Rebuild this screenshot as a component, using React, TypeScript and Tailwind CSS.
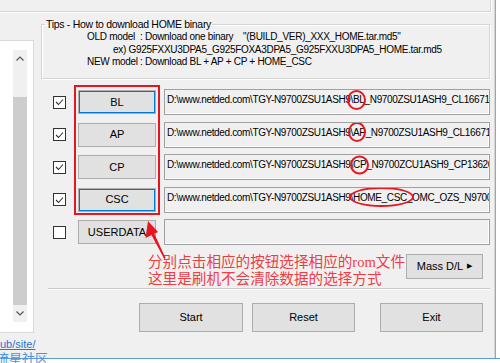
import React from "react";

const RED = "border-[#e5161f]";

function Check({ on }: { on: boolean }) {
  return (
    <div className="flex h-[13px] w-[13px] flex-none items-center justify-center border border-[#333] bg-white">
      {on && (
        <svg width="9" height="8" viewBox="0 0 9 8">
          <polyline points="1,4 3.5,6.5 8,1.5" fill="none" stroke="#333" strokeWidth="1.1" />
        </svg>
      )}
    </div>
  );
}

function Chevron({ up }: { up?: boolean }) {
  return (
    <svg width="8" height="5" viewBox="0 0 8 5">
      <polyline
        points={up ? "0.5,4.5 4,1 7.5,4.5" : "0.5,0.5 4,4 7.5,0.5"}
        fill="none"
        stroke="#555"
        strokeWidth="1.2"
      />
    </svg>
  );
}

type Row = {
  on: boolean;
  label: string;
  focus?: boolean;
  tag?: string;
  rest?: string;
  ring?: string;
  shift?: number;
};

const base = "D:\\www.netded.com\\TGY-N9700ZSU1ASH9";

const rows: Row[] = [
  { on: true, label: "BL", focus: true, tag: "\\BL", rest: "_N9700ZSU1ASH9_CL16671461_QB25185330_REV00.tar.md5", ring: "w-[19px] h-[20px]", shift: -11 },
  { on: true, label: "AP", tag: "\\AP", rest: "_N9700ZSU1ASH9_CL16671461_QB25185330_REV00.tar.md5", ring: "w-[18px] h-[20px]", shift: -10 },
  { on: true, label: "CP", tag: "\\CP", rest: "_N9700ZCU1ASH9_CP13620477_CL16671461.tar.md5", ring: "w-[19px] h-[19px]", shift: -8 },
  { on: true, label: "CSC", focus: true, tag: "\\HOME_CSC", rest: "_OMC_OZS_N9700OZS1ASH9_CL16671461.tar.md5", ring: "w-[65px] h-[20px]", shift: -30 },
  { on: false, label: "USERDATA" },
];

function WinButton({ children, className = "" }: { children: React.ReactNode; className?: string }) {
  return (
    <div
      className={`flex flex-none items-center justify-center border border-[#adadad] bg-[#e1e1e1] text-[11px] text-black ${className}`}
    >
      {children}
    </div>
  );
}

export default function App() {
  return (
    <div className="relative flex h-[363px] w-[500px] flex-col overflow-hidden bg-white font-['Liberation_Sans',Arial,sans-serif] text-[11px] text-black">
      <div className="flex h-[358px] flex-none">
        <div className="flex h-[358px] w-[494px] flex-none flex-col bg-[#f0f0f0]">
          {/* top group edge */}
          <div className="h-[13px] w-[492px] flex-none border-b border-r border-white">
            <div className="h-[12px] w-[491px] border-b border-r border-[#d5d5d5]" />
          </div>

          <div className="flex h-[323px] flex-none">
            {/* list box */}
            <div className="w-[34px] flex-none">
              <div className="mt-[27px] flex h-[293px] border-y border-r border-[#d9d9d9] bg-white">
                <div className="w-[13px]" />
                <div className="flex w-[14px] flex-col pt-[9px] pb-[10px]">
                  <div className="flex h-[17px] items-center justify-center bg-[#f0f0f0]">
                    <Chevron up />
                  </div>
                  <div className="h-[30px] bg-[#f0f0f0]" />
                  <div className="h-[208px] bg-[#cdcdcd]" />
                  <div className="flex h-[17px] items-center justify-center bg-[#f0f0f0]">
                    <Chevron />
                  </div>
                </div>
              </div>
            </div>

            <div className="flex flex-1 flex-col">
              {/* tips */}
              <fieldset className="ml-[7px] mt-[4px] h-[62px] w-[449px] border border-[#d5d5d5] px-0 text-[10px] tracking-[-0.3px] shadow-[inset_1px_1px_0_#fff,1px_1px_0_#fff]">
                <legend className="ml-[3px] px-[1px] text-[10.5px] leading-[14px]">
                  Tips - How to download HOME binary
                </legend>
                <div className="leading-[12.5px]">
                  <div className="whitespace-nowrap pl-[45px]">
                    <span className="inline-block w-[53px]">OLD model</span>
                    <span className="inline-block w-[103px]">: Download one binary</span>
                    <span>"(BUILD_VER)_XXX_HOME.tar.md5"</span>
                  </div>
                  <div className="whitespace-nowrap pl-[71px]">
                    ex) G925FXXU3DPA5_G925FOXA3DPA5_G925FXXU3DPA5_HOME.tar.md5
                  </div>
                  <div className="whitespace-nowrap pl-[45px]">
                    <span className="inline-block w-[53px]">NEW model</span>: Download BL + AP + CP + HOME_CSC
                  </div>
                </div>
              </fieldset>

              {/* file rows */}
              <div className="relative ml-[19px] mt-[10px] flex flex-col gap-[6.5px]">
                {rows.map((r) => (
                  <div key={r.label} className="flex h-[26px] items-center">
                    <Check on={r.on} />
                    <WinButton
                      className={`ml-[12px] h-[24px] w-[78px] ${
                        r.focus ? "border-[#0078d7] shadow-[inset_0_0_0_1px_#0078d7]" : ""
                      }`}
                    >
                      {r.label}
                    </WinButton>
                    <div className="ml-[8px] h-[26px] w-[326px] flex-none overflow-hidden whitespace-nowrap border border-[#a0a0a0] bg-[#f0f0f0] pl-[2px] pt-[3px] text-[10px] leading-[13px] tracking-[-0.35px] shadow-[inset_-1px_-1px_0_#fff]">
                      {r.tag && (
                        <>
                          {base}
                          <span className="relative">
                            {r.tag}
                            <span
                              className={`absolute left-1/2 top-1/2 -translate-y-1/2 rounded-[50%] border-2 ${RED} ${r.ring}`}
                              style={{ marginLeft: r.shift }}
                            />
                          </span>
                          {r.rest}
                        </>
                      )}
                    </div>
                  </div>
                ))}
                <div className={`pointer-events-none absolute left-[21px] top-[-4px] h-[130px] w-[86px] border-2 ${RED}`} />
              </div>

              {/* annotation + mass d/l */}
              <div className="mt-[9px] flex h-[34px] items-start">
                <div className="ml-[114px] whitespace-nowrap font-['Liberation_Serif','Noto_Sans_CJK_SC',serif] text-[14.6px] leading-[17px] text-[#ef3d45]">
                  <div>分别点击相应的按钮选择相应的rom文件</div>
                  <div>这里是刷机不会清除数据的选择方式</div>
                </div>
                <WinButton className="ml-auto mr-[11px] h-[25px] w-[77px] gap-[4px]">
                  <span>Mass D/L</span>
                  <span className="text-[7px]">▶</span>
                </WinButton>
              </div>

              <div className="ml-[14px] h-[2px] w-[442px] border-t border-[#c9c9c9] border-b border-b-white" />

              <div className="mt-[13px] flex">
                <WinButton className="ml-[105px] h-[29px] w-[104px]">Start</WinButton>
                <WinButton className="ml-[9px] h-[29px] w-[103px]">Reset</WinButton>
                <WinButton className="ml-[25px] h-[29px] w-[103px]">Exit</WinButton>
              </div>
            </div>
          </div>

          {/* footer link */}
          <div className="pt-[3px]">
            <div className="text-[11px] leading-[11px] text-[#2f70c8] underline">ub/site/</div>
            <div className="relative z-10 mt-[1px] -ml-[4px] font-['Noto_Sans_CJK_SC',sans-serif] text-[13px] leading-[14px] text-[#4f93db]">
              流星社区
            </div>
          </div>
        </div>
        <div className="w-px flex-none bg-[#d6d6d6]" />
        <div className="w-px flex-none bg-[#7aaee0]" />
      </div>
      <div className="h-px w-full flex-none bg-[#5b9bd8]" />

      {/* arrow */}
      <svg className="pointer-events-none absolute left-[140px] top-[215px]" width="30" height="48" viewBox="0 0 30 48">
        <polygon points="8,6 5.5,23 18,17" fill="#e5161f" />
        <polygon points="11,19 14,18 25.5,43 24,43.5" fill="#e5161f" />
      </svg>
    </div>
  );
}
